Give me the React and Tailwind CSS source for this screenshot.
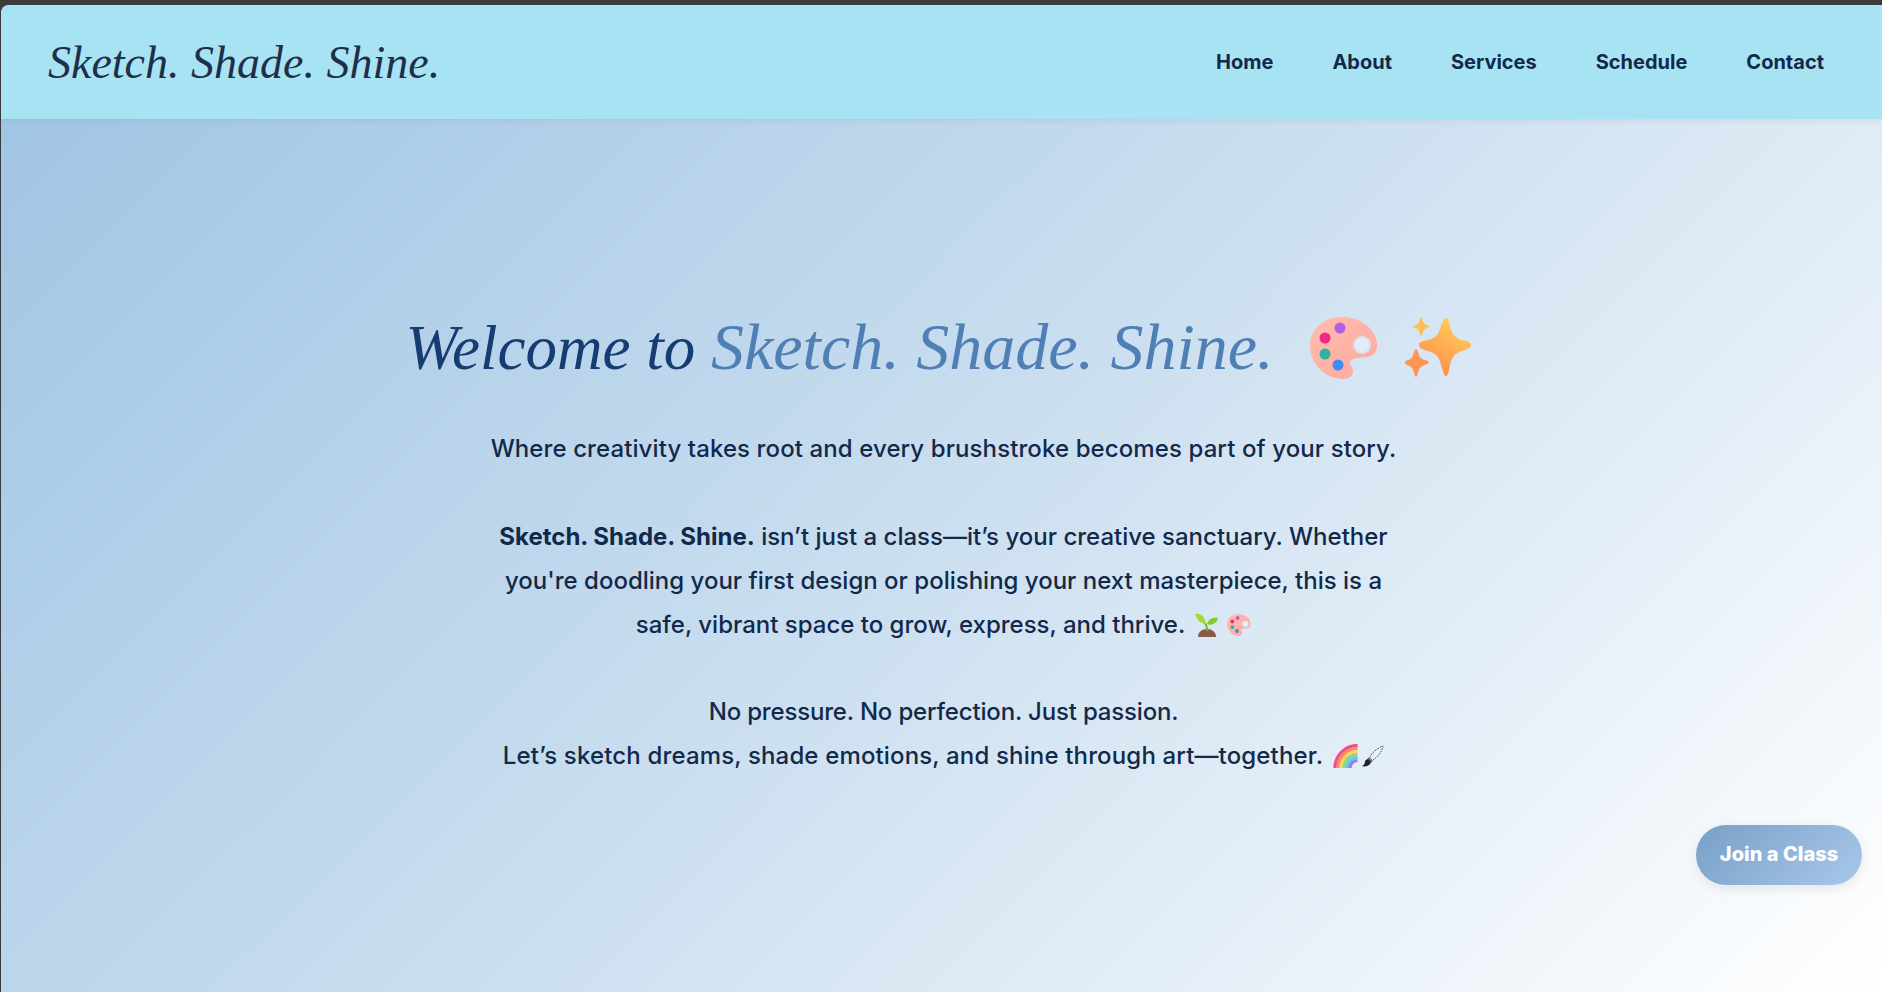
// Landing hero for the art class site
function Palette({ className, id }) {
  return (
    <svg viewBox="0 0 68 62" className={className} aria-hidden="true">
      <defs>
        <linearGradient id={id} x1="0" y1="0" x2="1" y2="1">
          <stop offset="0" stopColor="#ffbcae" />
          <stop offset="1" stopColor="#ffa9a0" />
        </linearGradient>
      </defs>
      <path
        fillRule="evenodd"
        fill={`url(#${id})`}
        d="M0 29C0 12 14 0 31 0c18 0 34 10 36 26 1 8-3 13-10 14-6 1-15 0-17 5-1 3 3 5 3 9 0 5-4 8-9 8C15 62 0 47 0 29ZM52 19a9 9 0 1 0 .1 18 9 9 0 0 0-.1-18Z"
      />
      <circle cx="52" cy="28" r="7" fill="#fff" fillOpacity="0.3" />
      <circle cx="30" cy="11" r="5.500" fill="#b45ee8" />
      <circle cx="15" cy="21" r="5.500" fill="#ee2a85" />
      <circle cx="15" cy="37" r="5.500" fill="#2fb0a0" />
      <circle cx="28" cy="48" r="5.500" fill="#3f8cf2" />
    </svg>
  )
}

function Sparkles({ className }) {
  return (
    <svg viewBox="0 0 66 62" className={className} aria-hidden="true">
      <defs>
        <linearGradient id="spark" x1="0.8" y1="0" x2="0.3" y2="1">
          <stop offset="0" stopColor="#ffd35a" />
          <stop offset="1" stopColor="#ff8a4c" />
        </linearGradient>
      </defs>
      <path
        fill="url(#spark)"
        d="M41 1c2 0 3 3 4 8 2 8 5 12 12 14 5 1 9 2 9 5s-4 4-9 6c-7 2-10 6-12 14-1 6-2 11-4 11s-3-5-5-11c-2-8-5-12-13-14-6-2-9-3-9-6s3-4 9-5c8-2 11-6 13-14 2-5 3-8 5-8Z"
      />
      <path
        fill="#ffbe56"
        d="M11 0c1 0 1 2 2 4 1 3 2 5 5 6 2 1 4 1 4 2s-2 2-4 2c-3 1-4 3-5 6-1 2-1 4-2 4s-1-2-2-4c-1-3-2-5-5-6-2 0-4-1-4-2s2-1 4-2c3-1 4-3 5-6 1-2 1-4 2-4Z"
        transform="translate(8 0) scale(0.74 0.8)"
      />
      <path
        fill="#ff9552"
        d="M11 32c1 0 2 3 3 6 1 3 3 4 6 5 2 1 4 1 4 2s-2 2-4 3c-3 1-5 2-6 5-1 3-2 7-3 7s-2-4-3-7c-1-3-3-4-6-5-2-1-2-2-2-3s1-1 3-2c3-1 4-2 5-5 1-3 2-6 3-6Z"
      />
    </svg>
  )
}

function Seedling({ className }) {
  return (
    <svg viewBox="0 0 24 24" className={className} aria-hidden="true">
      <path fill="#8a5a44" d="M3 24c0-5 4-8 9-8s9 3 9 8Z" />
      <path fill="#6fb52c" d="M11 18c0-3-.5-6-2-8h2c1.500 2 2 5 2 8Z" />
      <path fill="#a4d936" d="M11 11C6 11 2 7 0 1c5-1 10 2 11 10Z" />
      <path fill="#86cb2c" d="M12 11c1-4 5-7 11-6-1 5-6 8-11 6Z" />
    </svg>
  )
}

function Rainbow({ className }) {
  const bands = [
    ['#f5488f', 22.500],
    ['#fb8a5a', 19.500],
    ['#fdd45c', 16.500],
    ['#8bd97a', 13.500],
    ['#62c9ee', 10.500],
    ['#9a7fe0', 7.500],
  ]
  return (
    <svg viewBox="0 0 24 24" className={className} aria-hidden="true">
      {bands.map(([color, r]) => (
        <path key={color} fill="none" stroke={color} strokeWidth="3.200" d={`M${24 - r} 24A${r} ${r} 0 0 1 24 ${24 - r}`} />
      ))}
    </svg>
  )
}

function Brush({ className }) {
  return (
    <svg viewBox="0 0 24 24" className={className} aria-hidden="true">
      <path fill="#e8f1f8" stroke="#47536a" strokeWidth="1" strokeDasharray="2 1" d="M9 13 C12 7 18 3 23 1c-1 6-5 11-11 15Z" />
      <path fill="#47536a" d="m8 13 4 4-2 2-4-4Z" />
      <path fill="#1c2430" d="M6 15c2 0 4 2 4 4-2 3-6 4-9 3 2-1 3-2 3-4 0-1 1-3 2-3Z" />
    </svg>
  )
}

const navLinks = ['Home', 'About', 'Services', 'Schedule', 'Contact']

export default function App() {
  return (
    <div className="flex h-[992px] w-full flex-col overflow-hidden bg-[#3b3b3b] pt-[5px] pl-px font-['Inter','Noto_Sans',sans-serif]">
      <div className="flex flex-1 flex-col overflow-hidden rounded-tl-lg bg-[linear-gradient(135deg,#9dc3e3_0%,#c5dbee_45%,#ffffff_100%)]">
        <header className="flex h-[114px] shrink-0 items-center justify-between bg-[#a8e3f4] pr-[58px] pl-[47px] shadow-[0_2px_6px_rgba(0,0,0,0.06)]">
          <div className="font-['Liberation_Serif',serif] text-[46px] text-[#1e2f4a] italic">Sketch. Shade. Shine.</div>
          <nav className="flex items-center gap-[59px]">
            {navLinks.map((link) => (
              <a key={link} className="text-[20px] font-bold text-[#12294a]">
                {link}
              </a>
            ))}
          </nav>
        </header>

        <main className="relative flex-1 pt-[188px] pl-[4px] text-center">
          <h1 className="flex items-center justify-center gap-[36px] pr-[11px] font-['Liberation_Serif',serif] text-[63px] leading-[80px] text-[#163d73] italic">
            <span>
              Welcome to <span className="text-[66px] text-[#4f7fb5]">Sketch. Shade. Shine.</span>
            </span>
            <span className="flex items-center gap-[27px] not-italic">
              <Palette id="pal-big" className="h-[62px] w-[68px]" />
              <Sparkles className="h-[62px] w-[66px]" />
            </span>
          </h1>

          <div className="mt-[39px] text-[24px] leading-[44px] font-medium text-[#12294a]">
            <p className="tracking-[0.1px]">Where creativity takes root and every brushstroke becomes part of your story.</p>
            <p className="mt-[44px]">
              <strong className="font-bold">Sketch. Shade. Shine.</strong> isn’t just a class—it’s your creative sanctuary. Whether
              <br />
              you're doodling your first design or polishing your next masterpiece, this is a
              <br />
              <span className="inline-flex items-center">
                safe, vibrant space to grow, express, and thrive.
                <Seedling className="ml-[10px] h-[24px] w-[24px]" />
                <Palette id="pal-small" className="ml-[8px] h-[22px] w-[24px]" />
              </span>
            </p>
            <p className="mt-[43px]">
              <span className="tracking-[-0.17px]">No pressure. No perfection. Just passion.</span>
              <br />
              <span className="inline-flex items-center tracking-[0.15px]">
                Let’s sketch dreams, shade emotions, and shine through art—together.
                <Rainbow className="ml-[10px] h-[24px] w-[25px]" />
                <Brush className="ml-[3px] h-[23px] w-[23px]" />
              </span>
            </p>
          </div>

          <button className="absolute right-[20px] bottom-[107px] h-[60px] w-[166px] rounded-full bg-[linear-gradient(135deg,#789fc6,#a9c8ea)] pb-[2px] text-[20px] font-extrabold text-white shadow-[0_4px_12px_rgba(0,0,0,0.08)]">
            Join a Class
          </button>
        </main>
      </div>
    </div>
  )
}
